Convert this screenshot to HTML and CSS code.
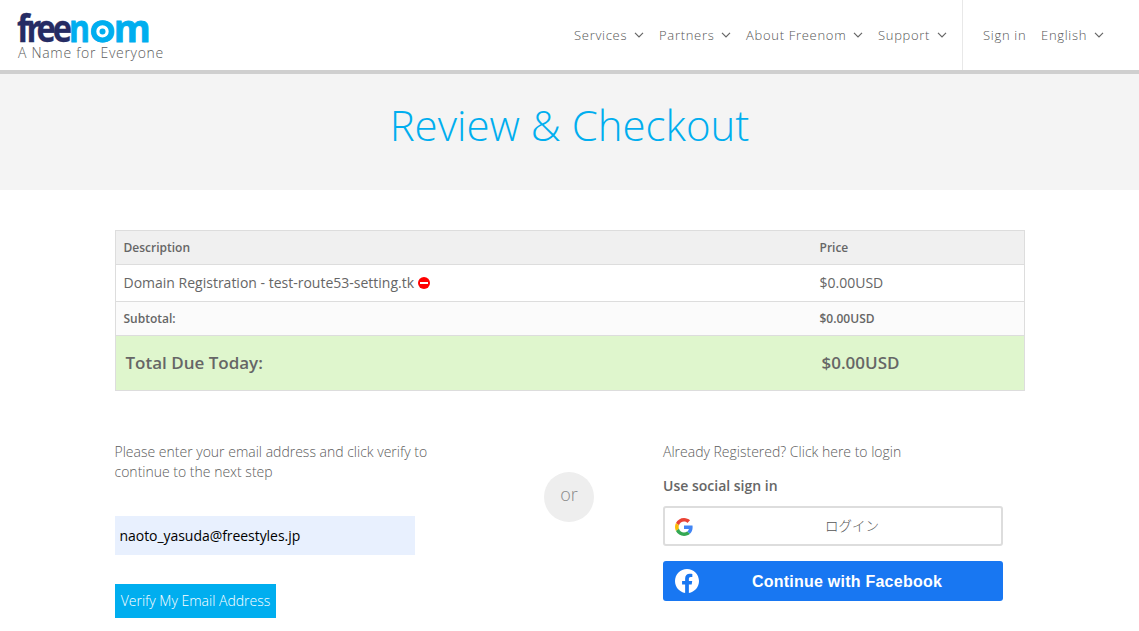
FILE: index.html
```html
<!DOCTYPE html>
<html lang="en">
<head>
<meta charset="utf-8">
<title>Review &amp; Checkout</title>
<link rel="stylesheet" href="styles.css">
</head>
<body>
<header class="header">
  <div class="brand">
    <svg class="logo" width="136" height="34" viewBox="0 0 136 34">
      <g class="logo-text">
        <text class="navy" transform="scale(.88 1)" x="0 10.8 22.3 40.6" y="30">free</text>
        <text class="sky" x="52" y="30" textLength="21" lengthAdjust="spacingAndGlyphs">n</text>
        <text class="sky" x="72.4" y="30" textLength="26" lengthAdjust="spacingAndGlyphs">o</text>
        <text class="sky" x="96.8" y="30" textLength="37" lengthAdjust="spacingAndGlyphs">m</text>
      </g>
      <circle cx="85.5" cy="19.4" r="8.7" fill="#fff" stroke="#00aeef" stroke-width="5"/>
      <circle cx="85.5" cy="19.4" r="3" fill="#00aeef"/>
    </svg>
    <div class="tagline">A Name for Everyone</div>
  </div>
  <nav class="nav">
    <a class="item services">Services<svg class="chev" viewBox="0 0 10 6"><path d="M1 .8 5 4.8 9 .8"/></svg></a>
    <a class="item partners">Partners<svg class="chev" viewBox="0 0 10 6"><path d="M1 .8 5 4.8 9 .8"/></svg></a>
    <a class="item about">About Freenom<svg class="chev" viewBox="0 0 10 6"><path d="M1 .8 5 4.8 9 .8"/></svg></a>
    <a class="item support">Support<svg class="chev" viewBox="0 0 10 6"><path d="M1 .8 5 4.8 9 .8"/></svg></a>
  </nav>
  <nav class="nav account">
    <a class="item signin">Sign in</a>
    <a class="item english">English<svg class="chev" viewBox="0 0 10 6"><path d="M1 .8 5 4.8 9 .8"/></svg></a>
  </nav>
</header>
<section class="hero"><h1 class="title">Review &amp; Checkout</h1></section>
<main class="content">
  <div class="cart">
    <div class="row head"><span>Description</span><span>Price</span></div>
    <div class="row product"><span>Domain Registration - test-route53-setting.tk <svg class="remove" width="12" height="12" viewBox="0 0 12 12"><circle cx="6" cy="6" r="6" fill="#f00"/><path d="M2 5h8v2H2z" fill="#fff"/></svg></span><span>$0.00USD</span></div>
    <div class="row subtotal"><span>Subtotal:</span><span>$0.00USD</span></div>
    <div class="row total"><span>Total Due Today:</span><span>$0.00USD</span></div>
  </div>
  <div class="options">
    <div class="verify">
      <p class="copy">Please enter your email address and click verify to<br>continue to the next step</p>
      <div class="email">naoto_yasuda@freestyles.jp</div>
      <button class="submit">Verify My Email Address</button>
    </div>
    <div class="or">or</div>
    <div class="login">
      <p class="copy">Already Registered? Click here to login</p>
      <h2 class="social">Use social sign in</h2>
      <a class="google">
        <svg width="18" height="18" viewBox="0 0 48 48"><path fill="#EA4335" d="M24 9.5c3.54 0 6.71 1.22 9.21 3.6l6.85-6.85C35.9 2.38 30.47 0 24 0 14.62 0 6.51 5.38 2.56 13.22l7.98 6.19C12.43 13.72 17.74 9.5 24 9.5z"/><path fill="#4285F4" d="M46.98 24.55c0-1.57-.15-3.09-.38-4.55H24v9.02h12.94c-.58 2.96-2.26 5.48-4.78 7.18l7.73 6c4.51-4.18 7.09-10.36 7.09-17.65z"/><path fill="#FBBC05" d="M10.53 28.59c-.48-1.45-.76-2.99-.76-4.59s.27-3.14.76-4.59l-7.98-6.19C.92 16.46 0 20.12 0 24c0 3.88.92 7.54 2.56 10.78l7.97-6.19z"/><path fill="#34A853" d="M24 48c6.48 0 11.93-2.13 15.89-5.81l-7.73-6c-2.15 1.45-4.92 2.3-8.16 2.3-6.26 0-11.57-4.22-13.47-9.91l-7.98 6.19C6.51 42.62 14.62 48 24 48z"/></svg>
        <span>ログイン</span>
      </a>
      <a class="facebook">
        <svg width="24" height="24" viewBox="0 0 24 24"><path fill="#fff" d="M24 12.07C24 5.4 18.63 0 12 0S0 5.4 0 12.07C0 18.1 4.39 23.1 10.13 24v-8.44H7.08v-3.49h3.05V9.41c0-3.02 1.79-4.69 4.53-4.69 1.31 0 2.68.24 2.68.24v2.97h-1.51c-1.49 0-1.96.93-1.96 1.89v2.25h3.33l-.53 3.49h-2.8V24C19.61 23.1 24 18.1 24 12.07z"/></svg>
        <span>Continue with Facebook</span>
      </a>
    </div>
  </div>
</main>
</body>
</html>
```
FILE: styles.css
```css
* { box-sizing: border-box; }
body { margin: 0; height: 631px; overflow: hidden; background: #fff; color: #666; font: 300 14px/20px "Open Sans", sans-serif; }
p, h1, h2 { margin: 0; }
.header { display: flex; height: 74px; border-bottom: 4px solid #cfcfcf; }
.brand { width: 574px; padding: 12px 0 0 17px; }
.logo { display: block; overflow: visible; }
.logo-text { font: 700 37px "Open Sans", sans-serif; stroke-width: .8; }
.navy { fill: #262c64; stroke: #262c64; stroke-width: .3; }
.sky { fill: #00aeef; stroke: #00aeef; }
.tagline { margin: -3px 0 0 1px; color: #5c5c5c; font-size: 14px; letter-spacing: .7px; white-space: nowrap; }
.nav { display: flex; height: 70px; width: 388px; color: #555; font-size: 13px; letter-spacing: .7px; line-height: 70px; white-space: nowrap; }
.item { display: flex; align-items: center; }
.services { width: 85px; }
.partners { width: 87px; }
.about { width: 132px; }
.chev { width: 10px; height: 6px; margin-left: 7px; fill: none; stroke: #666; stroke-width: 1.2; }
.account { width: 177px; padding-left: 20px; border-left: 1px solid #e8e8e8; }
.signin { width: 58px; }
.hero { height: 116px; background: #f4f4f4; text-align: center; }
.title { padding-top: 21px; font-size: 42px; line-height: 60px; font-weight: 300; color: #00aeef; }
.content { width: 910px; margin: 40px 0 0 115px; }
.cart { border: 1px solid #ddd; }
.row { display: grid; grid-template-columns: 696px 1fr; align-items: center; padding-left: 7.5px; border-bottom: 1px solid #ddd; }
.head { height: 34px; background: #f0f0f0; font-size: 12px; font-weight: 600; }
.product { height: 37px; font-weight: 400; }
.remove { vertical-align: -1px; }
.subtotal { height: 34px; background: #fbfbfb; font-size: 12px; font-weight: 600; }
.total { height: 54px; padding-left: 9.5px; border: 0; background: #dff6cd; font-size: 17px; font-weight: 600; }
.options { display: flex; padding-top: 51px; }
.verify { width: 429px; }
.copy { color: #5c5c5c; }
.verify .copy { margin-left: -.5px; }
.email { width: 300px; height: 39px; margin-top: 34px; padding-left: 4.5px; background: #e8f0fe; color: #000; font-weight: 400; line-height: 39px; letter-spacing: -.05px; }
.submit { display: block; width: 161px; height: 34px; margin-top: 29px; padding: 0; border: 0; background: #00aeef; color: #fff; font: 300 14px/34px "Open Sans", sans-serif; white-space: nowrap; }
.or { width: 50px; height: 50px; margin: 30px 69px 0 0; border-radius: 50%; background: #eee; color: #888; text-align: center; font-size: 18px; line-height: 44px; }
.login { width: 340px; }
.social { margin-top: 14px; font-size: 14px; line-height: 20px; font-weight: 600; }
.google, .facebook { display: flex; align-items: center; height: 40px; border-radius: 3px; }
.google { margin-top: 10px; padding-left: 10px; border: 2px solid #ddd; color: #555; font: 300 13.5px "Open Sans", "Noto Sans CJK JP", sans-serif; }
.google svg { margin-top: 2px; }
.google span { flex: 1; padding-left: 10px; margin-top: -2px; text-align: center; }
.facebook { margin-top: 15px; padding-left: 12px; background: #1877f2; color: #fff; font: 700 16px "Liberation Sans", sans-serif; letter-spacing: .24px; }
.facebook span { flex: 1; padding: 2px 8px 0 0; text-align: center; }
```
